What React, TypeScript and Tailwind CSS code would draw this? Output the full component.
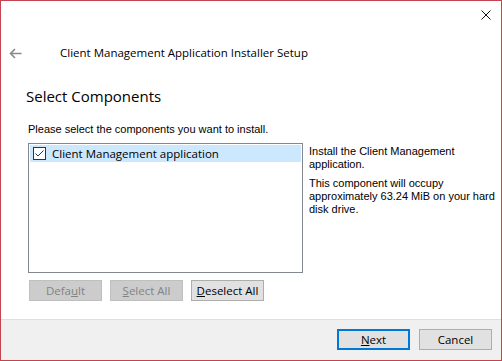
import React from 'react';

const segoe = { fontFamily: '"Open Sans", "Noto Sans", Arial, sans-serif' };
const tahoma = { fontFamily: '"Liberation Sans", Arial, sans-serif' };

function WinButton({ children, disabled, focused }: { children: React.ReactNode; disabled?: boolean; focused?: boolean }) {
  const base = 'w-[73px] h-[21px] shrink-0 flex items-center justify-center text-[11.5px] leading-none';
  if (disabled) return <div className={`${base} bg-[#cccccc] border border-[#bfbfbf] text-[#838383]`}>{children}</div>;
  if (focused) return <div className={`${base} bg-[#e1e1e1] border-2 border-[#0078d7] text-black`}>{children}</div>;
  return <div className={`${base} bg-[#e1e1e1] border border-[#adadad] text-black`}>{children}</div>;
}

export default function App() {
  return (
    <div className="w-[502px] h-[361px] border border-[#c4434c] bg-white flex flex-col overflow-hidden" style={segoe}>
      {/* title bar */}
      <div className="h-[28px] flex justify-end items-center pr-[10px]">
        <svg width="10" height="10" viewBox="0 0 10 10">
          <path d="M0.5 0.5 L9.5 9.5 M9.5 0.5 L0.5 9.5" stroke="#111" strokeWidth="1" />
        </svg>
      </div>

      {/* header */}
      <div className="h-[48px] flex items-center pl-[8px]">
        <svg width="13" height="11" viewBox="0 0 13 11">
          <path d="M12.5 5.5 H1.5 M6 1 L1.5 5.5 L6 10" stroke="#8a8a8a" strokeWidth="1.6" fill="none" />
        </svg>
        <span className="ml-[38px] text-[11.5px] text-black">Client Management Application Installer Setup</span>
      </div>

      {/* content */}
      <div className="flex-1 pl-[25px]">
        <div className="mt-[8px] text-[15px] leading-[22px] text-black">Select Components</div>
        <div className="mt-[16px] pl-[2px] text-[11px] leading-[13px] text-black" style={tahoma}>
          Please select the components you want to install.
        </div>
        <div className="mt-[7px] pl-[2px] flex gap-[6px]">
          <div className="w-[275px] h-[130px] shrink-0 border border-[#828790] p-px">
            <div className="h-[17px] bg-[#cce8ff] flex items-center pl-[3px]">
              <svg width="13" height="13" viewBox="0 0 13 13">
                <rect x="0.5" y="0.5" width="12" height="12" fill="#fff" stroke="#333" />
                <path d="M2.5 6.5 L5 9 L10.5 3.5" stroke="#333" strokeWidth="1" fill="none" />
              </svg>
              <span className="ml-[6px] text-[11.5px] text-black">Client Management application</span>
            </div>
          </div>
          <div className="w-[190px] shrink-0 text-[11px] leading-[13px] text-black pt-[2px]" style={tahoma}>
            <p>Install the Client Management application.</p>
            <p className="mt-[6px]">This component will occupy approximately 63.24 MiB on your hard disk drive.</p>
          </div>
        </div>
        <div className="mt-[7px] pl-[3px] flex gap-[8px]">
          <WinButton disabled>Defa<span className="underline">u</span>lt</WinButton>
          <WinButton disabled><span className="underline">S</span>elect All</WinButton>
          <WinButton><span className="underline">D</span>eselect All</WinButton>
        </div>
      </div>

      {/* footer */}
      <div className="h-[41px] border-t border-[#dfdfdf] bg-[#f0f0f0] flex justify-end items-start pt-[9px] pr-[9px] gap-[9px]">
        <WinButton focused><span className="underline">N</span>ext</WinButton>
        <WinButton>Cancel</WinButton>
      </div>
    </div>
  );
}
